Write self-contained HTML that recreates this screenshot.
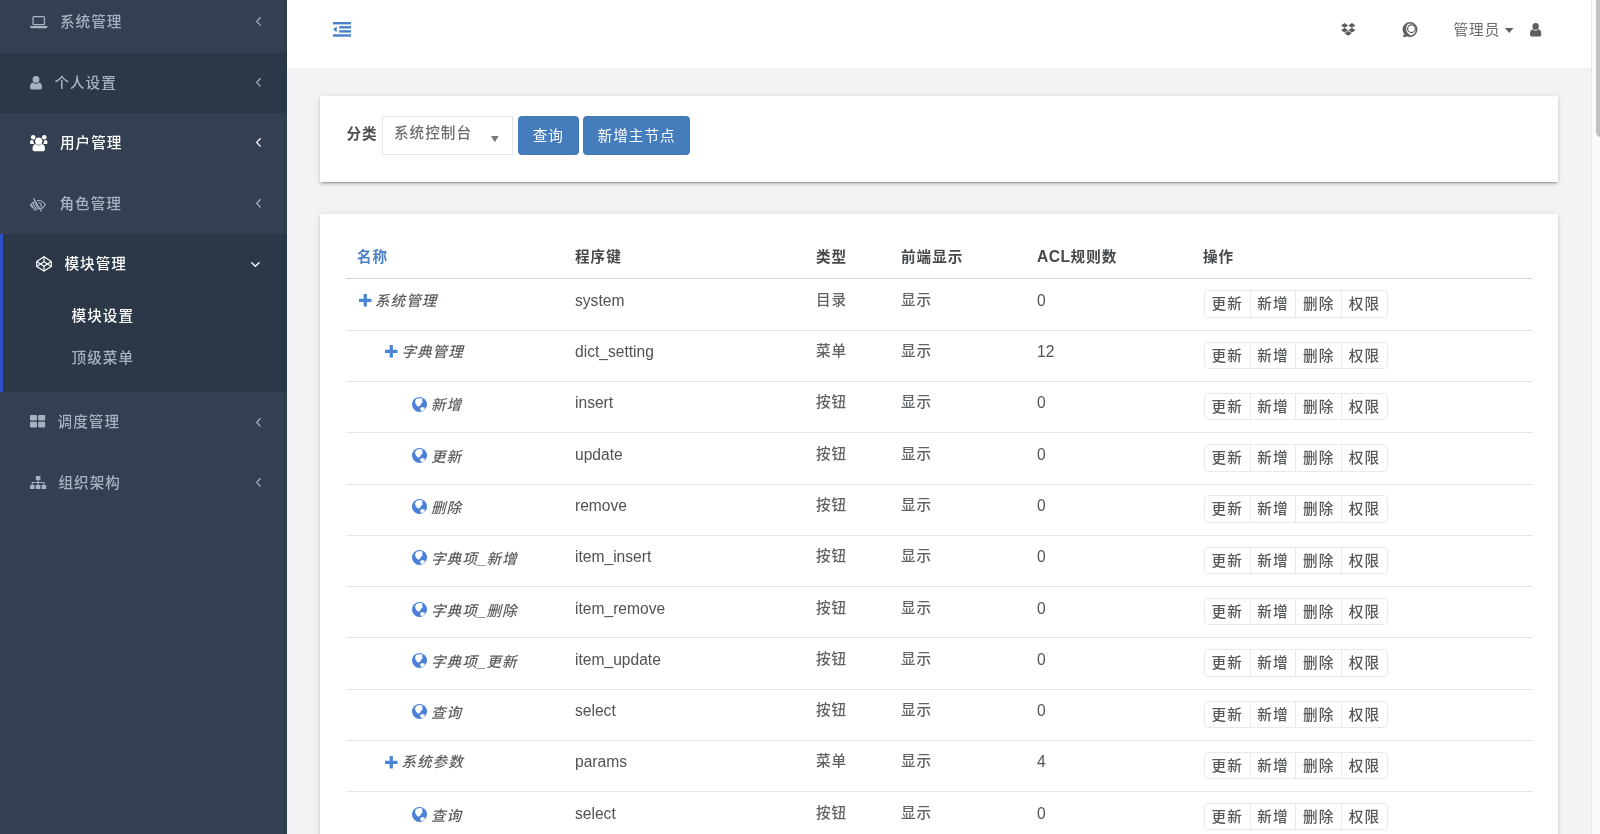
<!DOCTYPE html>
<html lang="zh-CN">
<head>
<meta charset="utf-8">
<title>模块设置</title>
<style>
*{box-sizing:border-box;margin:0;padding:0}
html,body{width:1600px;height:834px;overflow:hidden}
body{position:relative;will-change:transform;background:#f3f3f5;font-family:"Liberation Sans","Noto Sans CJK SC",sans-serif;font-size:14.6px;letter-spacing:1px;color:#676a6c;line-height:22.3px}
.en{font-size:15.6px;letter-spacing:0}
.abs{position:absolute}
svg{display:block;position:absolute;overflow:visible}

/* sidebar */
#side{position:absolute;left:0;top:0;width:287px;height:834px;background:#344051;overflow:hidden}
#side .dark{position:absolute;left:0;width:287px;background:#2c3847}
#side .lbl{position:absolute;height:22px;line-height:22px;color:#a7b1c2;font-weight:500;white-space:nowrap}
#side .lbl.w{color:#fff}

/* navbar */
#nav{position:absolute;left:287px;top:0;width:1304px;height:70px;background:linear-gradient(#fff,#fff 68px,#f4f6f7 68px,#f4f6f7 69px,#eaecee 69px,#eaecee 70px)}

/* scrollbar */
#sbt{position:absolute;left:1591px;top:0;width:9px;height:834px;background:#fafafa;border-left:1px solid #e8e8e8}
#sbh{position:absolute;left:1596px;top:-6px;width:10px;height:143px;border-radius:5px;background:#c1c1c1}

/* panels */
.panel{position:absolute;left:320px;width:1238px;background:#fff;box-shadow:0 2.4px 2.4px 0 rgba(0,0,0,.14),0 3.6px 1.2px -2.4px rgba(0,0,0,.2),0 1.2px 6px 0 rgba(0,0,0,.12)}

.btnp{position:absolute;top:116px;height:39px;background:#457cbc;border:1px solid #4176b5;border-radius:3.6px;color:#fff;text-align:center;line-height:38px}

/* table */
.th{position:absolute;top:246px;height:22px;line-height:22px;font-weight:700;color:#45494c;white-space:nowrap}
.row{position:absolute;left:345.5px;width:1187px;height:52px;color:#606365;font-weight:500}
.row>.k,.row>.a{font-weight:400;color:#505355;top:11.5px}
.row>i{position:absolute;left:0;right:0;height:1px;background:#e2e4e6}
.row>span{position:absolute;white-space:nowrap;height:22px;line-height:22px;top:10.5px}
.row .nm{font-style:italic;color:#5c5f61}
.row .k{left:229.5px;font-size:15.6px;letter-spacing:0}
.row .t{left:470.5px}
.row .d{left:555.5px}
.row .a{left:691.5px;font-size:15.6px;letter-spacing:0}
.bg{position:absolute;left:858.3px;width:184px;border:1px solid #e7eaec;border-radius:4px;background:#fff;display:flex}
.bg b{display:block;flex:1;font-weight:500;text-align:center;line-height:26px;height:100%;color:#55585a;border-left:1px solid #e7eaec}
.bg b:first-child{border-left:0}
.row svg.pl{fill:#4a86d8}
</style>
</head>
<body>

<div id="side">
  <div class="dark" style="top:53px;height:60px"></div>
  <div class="dark" style="top:233.5px;height:158.3px;border-left:3px solid #2f4fcb"></div>


  <!-- laptop -->
  <svg style="left:29.8px;top:15.9px" width="17.5" height="12.2" viewBox="0 0 17.5 12.2" fill="#a7b1c2"><rect x="3.05" y="0.65" width="11.4" height="7.9" rx="0.9" fill="none" stroke="#a7b1c2" stroke-width="1.3"/><path d="M0 10.1h17.5v.7a1.4 1.4 0 0 1-1.4 1.4H1.4A1.4 1.4 0 0 1 0 10.8z"/></svg>
  <!-- user -->
  <svg style="left:30px;top:75.9px" width="12" height="13.5" viewBox="0 0 12 13.5" fill="#a7b1c2"><circle cx="6" cy="3.4" r="3.4"/><path d="M0 11.2C0 8.2 1.2 6.6 3 6.4c.9.9 1.9 1.3 3 1.3s2.1-.4 3-1.3c1.8.200 3 1.8 3 4.8 0 1.4-.800 2.3-2 2.3H2c-1.2 0-2-.9-2-2.3z"/></svg>
  <!-- users -->
  <svg class="w" style="left:29.8px;top:135.1px" width="17.5" height="16.3" viewBox="0 0 17.5 16.3" fill="#fff"><circle cx="3.2" cy="2.3" r="2.3"/><circle cx="14.3" cy="2.3" r="2.3"/><circle cx="8.75" cy="6.2" r="3.6"/><path d="M0 7.4C0 5.9.6 5 1.7 4.9c.5.5 1.2.700 1.9.600-.300 1.3 0 2.6.800 3.6H1.5C.6 9.1 0 8.4 0 7.4zM17.5 7.4c0-1.5-.600-2.4-1.7-2.5-.500.5-1.2.700-1.9.600.3 1.3 0 2.6-.800 3.6H16c.9 0 1.5-.700 1.5-1.7zM2.5 13.9c0-3 1.2-4.7 3-4.9.9.9 2 1.4 3.25 1.4S11.1 9.9 12 9c1.8.200 3 1.9 3 4.9 0 1.5-.900 2.4-2.1 2.4H4.6c-1.2 0-2.1-.9-2.1-2.4z"/></svg>
  <!-- low vision -->
  <svg style="left:30.2px;top:197.5px" width="15.9" height="13.9" viewBox="0 0 15.9 13.9" fill="none" stroke="#a7b1c2" stroke-width="1.15" stroke-linecap="round"><path d="M3.7.6 11.3 13.3"/><path d="M7.3 2.6c3.5-.500 6.4 1.5 8 4.2-1 1.8-2.5 3.2-4.3 3.8"/><path d="M8.7 4.8c1.6.1 2.7 1.2 2.7 2.7 0 .5-.1.9-.3 1.3"/><path d="M5 3.6C3 4.3 1.5 5.5.5 7.1 1 8 1.7 8.8 2.5 9.5"/><path d="M3.1 5.8 6.7 11.8M1.6 7 4.8 12.3M5.3 5.5 8.5 10.9"/></svg>
  <!-- codepen -->
  <svg style="left:35.6px;top:256.2px" width="16" height="15.8" viewBox="0 0 16 15.8" fill="none" stroke="#fff" stroke-width="1.2" stroke-linejoin="round"><path d="M8 .7 15.3 5.4v5L8 15.1.700 10.4v-5z"/><path d="M.7 5.4 8 10.2l7.3-4.8M.7 10.4 8 5.7l7.3 4.7M8 .7v5M8 10.2v4.9"/></svg>
  <!-- th-large -->
  <svg style="left:30px;top:415.4px" width="15.2" height="12.4" viewBox="0 0 15.2 12.4" fill="#a7b1c2"><rect x="0" y="0" width="7" height="5.6" rx="1"/><rect x="8.2" y="0" width="7" height="5.6" rx="1"/><rect x="0" y="6.8" width="7" height="5.6" rx="1"/><rect x="8.2" y="6.8" width="7" height="5.6" rx="1"/></svg>
  <!-- sitemap -->
  <svg style="left:30px;top:476.1px" width="16.2" height="13.1" viewBox="0 0 16.2 13.1" fill="#a7b1c2"><rect x="5.8" y="0" width="4.6" height="4.1" rx=".5"/><rect x="0" y="9" width="4.6" height="4.1" rx=".5"/><rect x="5.8" y="9" width="4.6" height="4.1" rx=".5"/><rect x="11.6" y="9" width="4.6" height="4.1" rx=".5"/><path d="M8.1 4v5M2.3 9V6.5h11.6V9" fill="none" stroke="#a7b1c2" stroke-width="1.1"/></svg>
  <svg style="left:255.6px;top:17.1px" width="4.9" height="8.8" viewBox="0 0 4.9 8.8" fill="none" stroke="#a7b1c2" stroke-width="1.35" stroke-linecap="round" stroke-linejoin="round"><path d="M4.2.700.7 4.4l3.5 3.7"/></svg>
  <svg style="left:255.6px;top:77.6px" width="4.9" height="8.8" viewBox="0 0 4.9 8.8" fill="none" stroke="#a7b1c2" stroke-width="1.35" stroke-linecap="round" stroke-linejoin="round"><path d="M4.2.700.7 4.4l3.5 3.7"/></svg>
  <svg style="left:255.6px;top:138.1px" width="4.9" height="8.8" viewBox="0 0 4.9 8.8" fill="none" stroke="#fff" stroke-width="1.35" stroke-linecap="round" stroke-linejoin="round"><path d="M4.2.700.7 4.4l3.5 3.7"/></svg>
  <svg style="left:255.6px;top:198.6px" width="4.9" height="8.8" viewBox="0 0 4.9 8.8" fill="none" stroke="#a7b1c2" stroke-width="1.35" stroke-linecap="round" stroke-linejoin="round"><path d="M4.2.700.7 4.4l3.5 3.7"/></svg>
  <svg style="left:250.6px;top:261.6px" width="8.8" height="4.9" viewBox="0 0 8.8 4.9" fill="none" stroke="#fff" stroke-width="1.35" stroke-linecap="round" stroke-linejoin="round"><path d="M.7.7 4.4 4.2 8.1.700"/></svg>
  <svg style="left:255.6px;top:417.6px" width="4.9" height="8.8" viewBox="0 0 4.9 8.8" fill="none" stroke="#a7b1c2" stroke-width="1.35" stroke-linecap="round" stroke-linejoin="round"><path d="M4.2.700.7 4.4l3.5 3.7"/></svg>
  <svg style="left:255.6px;top:478.1px" width="4.9" height="8.8" viewBox="0 0 4.9 8.8" fill="none" stroke="#a7b1c2" stroke-width="1.35" stroke-linecap="round" stroke-linejoin="round"><path d="M4.2.700.7 4.4l3.5 3.7"/></svg>
  <div class="abs" style="left:283.3px;top:0;width:3.7px;height:834px;background:rgba(30,66,56,.2)"></div>
  <div class="lbl" style="left:60px;top:11px">系统管理</div>
  <div class="lbl" style="left:54.4px;top:71.5px">个人设置</div>
  <div class="lbl w" style="left:60px;top:132px">用户管理</div>
  <div class="lbl" style="left:59.5px;top:192.5px">角色管理</div>
  <div class="lbl w" style="left:64.5px;top:253px">模块管理</div>
  <div class="lbl w" style="left:71.6px;top:304.5px">模块设置</div>
  <div class="lbl" style="left:71.6px;top:346.5px">顶级菜单</div>
  <div class="lbl" style="left:57.6px;top:411px">调度管理</div>
  <div class="lbl" style="left:58.5px;top:471.5px">组织架构</div>
</div>

<div id="nav">
  <!-- dedent -->
  <svg style="left:46px;top:22.3px" width="18" height="14.7" viewBox="0 0 18 14.7" fill="#4681cb"><rect x="0" y="0" width="18" height="2.4"/><rect x="6.2" y="4.1" width="11.8" height="2.4"/><rect x="6.2" y="8.2" width="11.8" height="2.4"/><rect x="0" y="12.3" width="18" height="2.4"/><path d="M3.7 4.4v5.9L0 7.35z"/></svg>
  <!-- dropbox -->
  <svg style="left:1054px;top:23.2px" width="14.5" height="12.8" viewBox="0 0 14.5 12.8" fill="#5e5e5e"><path d="M3.6 0 7.25 2.4 3.6 4.8 0 2.4zM10.9 0l3.6 2.4-3.6 2.4-3.65-2.4zM0 7.2l3.6-2.4 3.65 2.4L3.6 9.6zM10.9 4.8l3.6 2.4-3.6 2.4-3.65-2.4zM3.6 10.3l3.65-2.4 3.65 2.4-3.65 2.5z"/></svg>
  <!-- codiepie -->
  <svg style="left:1114.9px;top:22.4px" width="15.8" height="15.2" viewBox="0 0 15.8 15.2" fill="#5e5e5e"><circle cx="8" cy="7.5" r="6.7" fill="none" stroke="#5e5e5e" stroke-width="1.5"/><path d="M8 7.5 13.8 4.5A6.5 6.5 0 1 0 13.8 10.5z" opacity=".001"/><path d="M1.3 7.5a6.7 6.7 0 0 1 6-6.65C5 2.3 4 4.6 4.2 7.2c.2 2.6 1.7 4.7 4 5.7l-.6 1.3C4.1 13.9 1.3 11.1 1.3 7.5z"/><circle cx="9.5" cy="6.7" r="3.9" fill="none" stroke="#5e5e5e" stroke-width="1.2"/><rect x="1.3" y="12.7" width="3" height="2.3" rx=".6"/></svg>
  <div class="abs" style="left:1166.5px;top:19px;height:22px;line-height:22px;color:#6a6c6e">管理员</div>
  <svg style="left:1218px;top:28px" width="8.4" height="4.9" viewBox="0 0 8.4 4.9" fill="#5e5e5e"><path d="M0 0h8.4L4.2 4.9z"/></svg>
  <!-- user -->
  <svg style="left:1242.7px;top:23.3px" width="11.3" height="13.45" viewBox="0 0 12 13.5" preserveAspectRatio="none" fill="#5e5e5e"><circle cx="6" cy="3.4" r="3.4"/><path d="M0 11.2C0 8.2 1.2 6.6 3 6.4c.900.9 1.9 1.3 3 1.3s2.1-.400 3-1.3c1.8.200 3 1.8 3 4.8 0 1.4-.800 2.3-2 2.3H2c-1.2 0-2-.900-2-2.3z"/></svg>
</div>
<div id="sbt"></div>
<div id="sbh"></div>

<div class="panel" style="top:96px;height:86px"></div>
<div class="abs" style="left:346.5px;top:123px;height:22px;line-height:22px;font-weight:700;color:#4b4f52">分类</div>
<div class="abs" style="left:382px;top:116px;width:131px;height:39px;border:1px solid #e5e6e7;background:#fff"></div>
<div class="abs" style="left:394px;top:121.5px;height:22px;line-height:22px;font-weight:500;color:#6a6d6f">系统控制台</div>
<svg style="left:490.6px;top:136.2px" width="7.6" height="6.3" viewBox="0 0 7.6 6.3"><path d="M0 0h7.6L3.8 6.3z" fill="#777"/></svg>
<div class="btnp" style="left:518px;width:60.5px">查询</div>
<div class="btnp" style="left:583px;width:107.3px">新增主节点</div>

<div class="panel" style="top:214.4px;height:640px"></div>
<div class="th" style="left:357px;color:#4a7fc1">名称</div>
<div class="th" style="left:575px">程序键</div>
<div class="th" style="left:816px">类型</div>
<div class="th" style="left:901px">前端显示</div>
<div class="th" style="left:1037px"><span class="en" style="letter-spacing:.5px">ACL</span>规则数</div>
<div class="th" style="left:1203px">操作</div>

<!--ROWS-->
<div class="row" style="top:278px"><i style="top:0px;background:#d3d6d9"></i><svg class="pl" style="left:13.2px;top:16.0px" width="12.5" height="12.5" viewBox="0 0 10 10"><path d="M3.7 0h2.6v3.7H10v2.6H6.3V10H3.7V6.3H0V3.7h3.7z"/></svg><span class="nm" style="left:29.5px;top:12px">系统管理</span><span class="k" style="top:12px">system</span><span class="t" style="top:11px">目录</span><span class="d" style="top:11px">显示</span><span class="a" style="top:12px">0</span><div class="bg" style="top:12px;height:28px"><b>更新</b><b>新增</b><b>删除</b><b>权限</b></div></div>
<div class="row" style="top:329px"><i style="top:1px"></i><svg class="pl" style="left:39.5px;top:16.3px" width="12.5" height="12.5" viewBox="0 0 10 10"><path d="M3.7 0h2.6v3.7H10v2.6H6.3V10H3.7V6.3H0V3.7h3.7z"/></svg><span class="nm" style="left:55.9px;top:12px">字典管理</span><span class="k" style="top:12px">dict_setting</span><span class="t" style="top:11px">菜单</span><span class="d" style="top:11px">显示</span><span class="a" style="top:12px">12</span><div class="bg" style="top:13px;height:27px"><b>更新</b><b>新增</b><b>删除</b><b>权限</b></div></div>
<div class="row" style="top:380px"><i style="top:1px"></i><svg class="gl" style="left:66.4px;top:16.6px" width="15" height="15" viewBox="0 0 15 15"><circle cx="7.5" cy="7.5" r="7.5" fill="#4b80da"/><path d="M4.500 1.800 8.100.9l2.500.9-.5 2 .7 1.500-1.700 1.500-1 2-1.600 1-1.500-1-1.500-2L3 4.300z" fill="#fff"/><path d="M8 11.300 10.100 9.900 12.900 10.700 12.400 12.900 10 14.300 8.600 13.200z" fill="#fff"/></svg><span class="nm" style="left:85.5px;top:14px">新增</span><span class="k" style="top:12px">insert</span><span class="t" style="top:11px">按钮</span><span class="d" style="top:11px">显示</span><span class="a" style="top:12px">0</span><div class="bg" style="top:13px;height:27px"><b>更新</b><b>新增</b><b>删除</b><b>权限</b></div></div>
<div class="row" style="top:432px"><i style="top:0px"></i><svg class="gl" style="left:66.4px;top:15.9px" width="15" height="15" viewBox="0 0 15 15"><circle cx="7.5" cy="7.5" r="7.5" fill="#4b80da"/><path d="M4.500 1.800 8.100.9l2.500.9-.5 2 .7 1.500-1.700 1.500-1 2-1.600 1-1.500-1-1.500-2L3 4.300z" fill="#fff"/><path d="M8 11.300 10.100 9.900 12.900 10.700 12.400 12.900 10 14.300 8.600 13.200z" fill="#fff"/></svg><span class="nm" style="left:85.5px;top:14px">更新</span><span class="k" style="top:12px">update</span><span class="t" style="top:11px">按钮</span><span class="d" style="top:11px">显示</span><span class="a" style="top:12px">0</span><div class="bg" style="top:12px;height:28px"><b>更新</b><b>新增</b><b>删除</b><b>权限</b></div></div>
<div class="row" style="top:483px"><i style="top:1px"></i><svg class="gl" style="left:66.4px;top:16.1px" width="15" height="15" viewBox="0 0 15 15"><circle cx="7.5" cy="7.5" r="7.5" fill="#4b80da"/><path d="M4.500 1.800 8.100.9l2.500.9-.5 2 .7 1.500-1.700 1.500-1 2-1.600 1-1.500-1-1.500-2L3 4.300z" fill="#fff"/><path d="M8 11.300 10.100 9.900 12.900 10.700 12.400 12.900 10 14.300 8.600 13.200z" fill="#fff"/></svg><span class="nm" style="left:85.5px;top:14px">删除</span><span class="k" style="top:12px">remove</span><span class="t" style="top:11px">按钮</span><span class="d" style="top:11px">显示</span><span class="a" style="top:12px">0</span><div class="bg" style="top:12px;height:28px"><b>更新</b><b>新增</b><b>删除</b><b>权限</b></div></div>
<div class="row" style="top:534px"><i style="top:1px"></i><svg class="gl" style="left:66.4px;top:16.4px" width="15" height="15" viewBox="0 0 15 15"><circle cx="7.5" cy="7.5" r="7.5" fill="#4b80da"/><path d="M4.500 1.800 8.100.9l2.500.9-.5 2 .7 1.500-1.700 1.500-1 2-1.600 1-1.500-1-1.500-2L3 4.300z" fill="#fff"/><path d="M8 11.300 10.100 9.900 12.900 10.700 12.400 12.900 10 14.300 8.600 13.200z" fill="#fff"/></svg><span class="nm" style="left:85.5px;top:14px">字典项<span class="en">_</span>新增</span><span class="k" style="top:12px">item_insert</span><span class="t" style="top:11px">按钮</span><span class="d" style="top:11px">显示</span><span class="a" style="top:12px">0</span><div class="bg" style="top:13px;height:27px"><b>更新</b><b>新增</b><b>删除</b><b>权限</b></div></div>
<div class="row" style="top:586px"><i style="top:0px"></i><svg class="gl" style="left:66.4px;top:15.7px" width="15" height="15" viewBox="0 0 15 15"><circle cx="7.5" cy="7.5" r="7.5" fill="#4b80da"/><path d="M4.500 1.800 8.100.9l2.500.9-.5 2 .7 1.500-1.700 1.500-1 2-1.600 1-1.500-1-1.500-2L3 4.300z" fill="#fff"/><path d="M8 11.300 10.100 9.900 12.900 10.700 12.400 12.900 10 14.300 8.600 13.200z" fill="#fff"/></svg><span class="nm" style="left:85.5px;top:14px">字典项<span class="en">_</span>删除</span><span class="k" style="top:12px">item_remove</span><span class="t" style="top:11px">按钮</span><span class="d" style="top:11px">显示</span><span class="a" style="top:12px">0</span><div class="bg" style="top:12px;height:27px"><b>更新</b><b>新增</b><b>删除</b><b>权限</b></div></div>
<div class="row" style="top:637px"><i style="top:0px"></i><svg class="gl" style="left:66.4px;top:16.0px" width="15" height="15" viewBox="0 0 15 15"><circle cx="7.5" cy="7.5" r="7.5" fill="#4b80da"/><path d="M4.500 1.800 8.100.9l2.500.9-.5 2 .7 1.500-1.700 1.500-1 2-1.600 1-1.500-1-1.500-2L3 4.300z" fill="#fff"/><path d="M8 11.300 10.100 9.900 12.900 10.700 12.400 12.900 10 14.300 8.600 13.200z" fill="#fff"/></svg><span class="nm" style="left:85.5px;top:14px">字典项<span class="en">_</span>更新</span><span class="k" style="top:12px">item_update</span><span class="t" style="top:11px">按钮</span><span class="d" style="top:11px">显示</span><span class="a" style="top:12px">0</span><div class="bg" style="top:12px;height:28px"><b>更新</b><b>新增</b><b>删除</b><b>权限</b></div></div>
<div class="row" style="top:688px"><i style="top:1px"></i><svg class="gl" style="left:66.4px;top:16.3px" width="15" height="15" viewBox="0 0 15 15"><circle cx="7.5" cy="7.5" r="7.5" fill="#4b80da"/><path d="M4.500 1.800 8.100.9l2.500.9-.5 2 .7 1.500-1.700 1.500-1 2-1.600 1-1.500-1-1.500-2L3 4.300z" fill="#fff"/><path d="M8 11.300 10.100 9.900 12.900 10.700 12.400 12.900 10 14.300 8.600 13.200z" fill="#fff"/></svg><span class="nm" style="left:85.5px;top:14px">查询</span><span class="k" style="top:12px">select</span><span class="t" style="top:11px">按钮</span><span class="d" style="top:11px">显示</span><span class="a" style="top:12px">0</span><div class="bg" style="top:13px;height:27px"><b>更新</b><b>新增</b><b>删除</b><b>权限</b></div></div>
<div class="row" style="top:739px"><i style="top:1px"></i><svg class="pl" style="left:39.5px;top:16.6px" width="12.5" height="12.5" viewBox="0 0 10 10"><path d="M3.7 0h2.6v3.7H10v2.6H6.3V10H3.7V6.3H0V3.7h3.7z"/></svg><span class="nm" style="left:55.9px;top:12px">系统参数</span><span class="k" style="top:12px">params</span><span class="t" style="top:11px">菜单</span><span class="d" style="top:11px">显示</span><span class="a" style="top:12px">4</span><div class="bg" style="top:13px;height:27px"><b>更新</b><b>新增</b><b>删除</b><b>权限</b></div></div>
<div class="row" style="top:791px"><i style="top:0px"></i><svg class="gl" style="left:66.4px;top:15.8px" width="15" height="15" viewBox="0 0 15 15"><circle cx="7.5" cy="7.5" r="7.5" fill="#4b80da"/><path d="M4.500 1.800 8.100.9l2.500.9-.5 2 .7 1.500-1.700 1.500-1 2-1.600 1-1.500-1-1.500-2L3 4.300z" fill="#fff"/><path d="M8 11.300 10.100 9.900 12.900 10.700 12.400 12.900 10 14.300 8.600 13.200z" fill="#fff"/></svg><span class="nm" style="left:85.5px;top:14px">查询</span><span class="k" style="top:12px">select</span><span class="t" style="top:11px">按钮</span><span class="d" style="top:11px">显示</span><span class="a" style="top:12px">0</span><div class="bg" style="top:12px;height:27px"><b>更新</b><b>新增</b><b>删除</b><b>权限</b></div></div>
<!--/ROWS-->

</body>
</html>
